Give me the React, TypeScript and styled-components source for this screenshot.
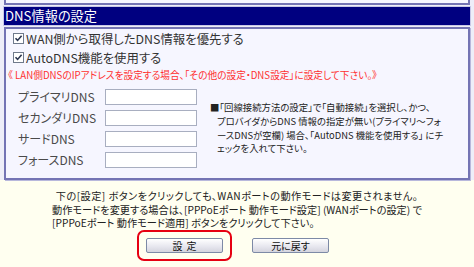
import React from "react";
import styled, { createGlobalStyle } from "styled-components";

const Global = createGlobalStyle`
  html, body { margin: 0; padding: 0; }
  body {
    background: #fffff0;
    font-family: "Noto Sans CJK JP", "Noto Sans", sans-serif;
    font-feature-settings: "palt";
    width: 474px;
    height: 267px;
    overflow: hidden;
  }
`;

const Page = styled.div`
  width: 474px;
  display: flex;
  flex-direction: column;
`;

const Frame = styled.div`
  background: #eeeef8;
  padding: 0 4px 0 4px;
  display: flex;
  flex-direction: column;
`;

const PrevBox = styled.div`
  height: 3px;
  background: #f6f6ff;
  border: 2px solid #7474b4;
  border-top: none;
`;

const Header = styled.div`
  margin-top: 2px;
  height: 18px;
  background: #000080;
  color: #ffffff;
  font-size: 13.2px;
  line-height: 18px;
  padding-left: 1px;
  box-shadow: 0 0 0 1px #c8c8e8;
`;

const Box = styled.div`
  margin-top: 2px;
  background: #f6f6ff;
  border: 2px solid #7474b4;
  box-shadow: 1px 1px 0 #b8b8dc;
  padding: 0 0 10px 0;
  display: flex;
  flex-direction: column;
`;

const CheckRow = styled.label`
  height: 19px;
  display: flex;
  align-items: center;
  gap: 2px;
  padding-left: 7px;
  font-size: 12.4px;
  color: #333;
`;

const CheckBox = styled.span`
  width: 9px;
  height: 9px;
  border: 1px solid #6f7a8c;
  background: #ffffff;
  display: inline-flex;
  align-items: center;
  justify-content: center;
  flex: none;
`;

const RedNote = styled.div`
  margin-top: 2px;
  padding-left: 2px;
  height: 12px;
  line-height: 12px;
  font-size: 9.7px;
  color: #ff3030;
  white-space: nowrap;
`;

const DnsArea = styled.div`
  margin-top: 8px;
  display: flex;
  align-items: center;
`;

const DnsGrid = styled.div`
  display: grid;
  grid-template-columns: 87px 92px;
  row-gap: 5px;
  padding-left: 12px;
  align-items: center;
`;

const Label = styled.div`
  font-size: 12px;
  color: #4a4a4a;
  line-height: 16px;
  white-space: nowrap;
`;

const Input = styled.div`
  height: 14px;
  background: #ffffff;
  border: 1px solid #a8aec0;
`;

const Help = styled.div`
  margin-left: 13px;
  font-size: 9.4px;
  line-height: 13.6px;
  color: #222;
  display: flex;
  flex-direction: column;
`;

const HelpLine = styled.div<{ $indent?: boolean }>`
  white-space: nowrap;
  padding-left: ${(p) => (p.$indent ? "7px" : "0")};
`;

const Footer = styled.div`
  padding-top: 9px;
  display: flex;
  flex-direction: column;
  align-items: center;
  font-size: 10.2px;
  color: #222;
  line-height: 13.5px;
`;

const Line = styled.div<{ $wide?: boolean }>`
  white-space: nowrap;
  letter-spacing: ${(p) => (p.$wide ? "0.45px" : "0")};
`;

const Block = styled.div`
  display: flex;
  flex-direction: column;
  align-items: flex-start;
`;

const ButtonRow = styled.div`
  margin-top: 0px;
  display: flex;
  align-items: center;
  gap: 20px;
  padding-right: 8px;
`;

const Highlight = styled.div`
  border: 2px solid #e60012;
  border-radius: 7px;
  padding: 6px 7px;
  display: flex;
`;

const Button = styled.div<{ $spaced?: boolean }>`
  width: 75px;
  height: 13px;
  border: 1px solid #7d8aa6;
  border-radius: 2px;
  background: linear-gradient(#ffffff, #e6e6ee 60%, #d4d4de);
  font-size: 10px;
  line-height: 13px;
  text-align: center;
  color: #111;
  letter-spacing: ${(p) => (p.$spaced ? "4px" : "0")};
  text-indent: ${(p) => (p.$spaced ? "4px" : "0")};
`;

const Check = () => (
  <svg width="9" height="9" viewBox="0 0 9 9">
    <path d="M1.5 4.2 L3.6 6.4 L7.6 1.8" fill="none" stroke="#2a3550" strokeWidth="1.6" />
  </svg>
);

export default function App() {
  return (
    <Page>
      <Global />
      <Frame>
        <PrevBox />
        <Header>DNS情報の設定</Header>
        <Box>
          <CheckRow>
            <CheckBox>
              <Check />
            </CheckBox>
            WAN側から取得したDNS情報を優先する
          </CheckRow>
          <CheckRow>
            <CheckBox>
              <Check />
            </CheckBox>
            AutoDNS機能を使用する
          </CheckRow>
          <RedNote>
            《 LAN側DNSのIPアドレスを設定する場合、「その他の設定・DNS設定」に設定して下さい。》
          </RedNote>
          <DnsArea>
            <DnsGrid>
              <Label>プライマリDNS</Label>
              <Input />
              <Label>セカンダリDNS</Label>
              <Input />
              <Label>サードDNS</Label>
              <Input />
              <Label>フォースDNS</Label>
              <Input />
            </DnsGrid>
            <Help>
              <HelpLine>■「回線接続方法の設定」で「自動接続」を選択し、かつ、</HelpLine>
              <HelpLine $indent>プロバイダからDNS 情報の指定が無い(プライマリ〜フォ</HelpLine>
              <HelpLine $indent>ースDNSが空欄) 場合、「AutoDNS 機能を使用する」 にチ</HelpLine>
              <HelpLine $indent>ェックを入れて下さい。</HelpLine>
            </Help>
          </DnsArea>
        </Box>
      </Frame>
      <Footer>
        <Line $wide>下の[設定] ボタンをクリックしても、WANポートの動作モードは変更されません。</Line>
        <Block>
          <Line>動作モードを変更する場合は、[PPPoEポート 動作モード設定] (WANポートの設定) で</Line>
          <Line>[PPPoEポート 動作モード適用] ボタンをクリックして下さい。</Line>
        </Block>
        <ButtonRow>
          <Highlight>
            <Button $spaced>設定</Button>
          </Highlight>
          <Button>元に戻す</Button>
        </ButtonRow>
      </Footer>
    </Page>
  );
}
